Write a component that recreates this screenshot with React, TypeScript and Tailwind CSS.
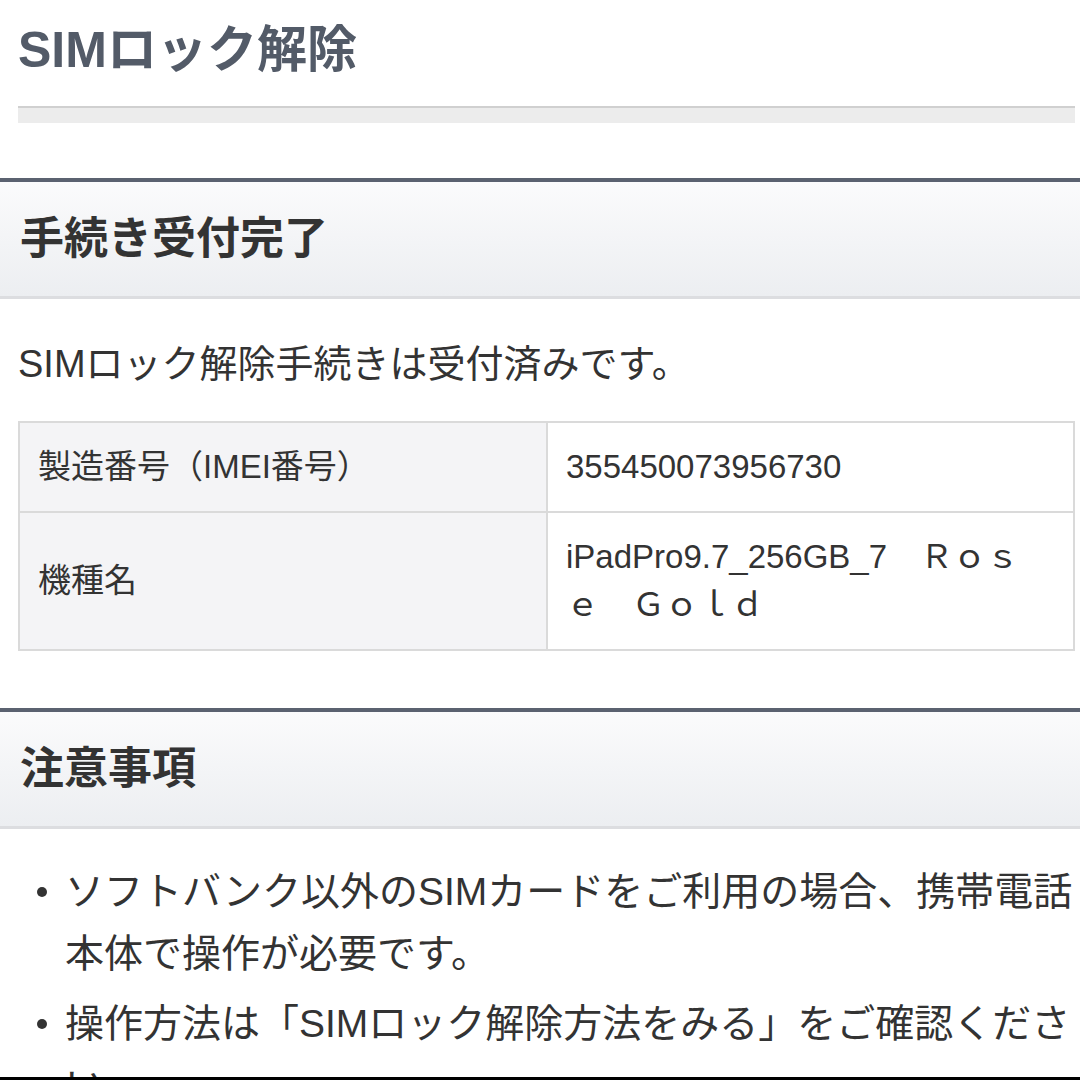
import React from 'react';

const font = { fontFamily: '"Liberation Sans", "Noto Sans CJK JP", sans-serif' };

const SectionHeader: React.FC<{ title: string }> = ({ title }) => (
  <div className="border-t-4 border-b-[3px] border-t-[#5b6270] border-b-[#dcdde0] bg-gradient-to-b from-[#fbfbfc] to-[#eceef1] h-[121px] flex items-center px-[20px]">
    <h2 className="text-[44px] font-bold leading-none text-[#333333]">{title}</h2>
  </div>
);

const rows = [
  { label: '製造番号（IMEI番号）', value: '355450073956730' },
  { label: '機種名', value: 'iPadPro9.7_256GB_7　Ｒｏｓｅ　Ｇｏｌｄ' },
];

const notes = [
  'ソフトバンク以外のSIMカードをご利用の場合、携帯電話本体で操作が必要です。',
  '操作方法は「SIMロック解除方法をみる」をご確認ください。',
];

const App: React.FC = () => {
  return (
    <div className="h-[1080px] w-[1080px] overflow-hidden flex flex-col bg-white" style={font}>
      <div className="flex-1 min-h-0 overflow-hidden">
        <div className="px-[18px] pt-[20px]">
          <h1 className="text-[50px] font-bold leading-[60px] text-[#535b68]">SIMロック解除</h1>
          <div className="mt-[26px] h-[17px] border-t-2 border-[#d0d0d0] bg-[#ececec] mr-[-13px]" />
        </div>

        <div className="mt-[55px]">
          <SectionHeader title="手続き受付完了" />
        </div>

        <div className="px-[18px] pr-[5px]">
          <p className="mt-[39px] text-[38px] leading-[52px] text-[#333333]">SIMロック解除手続きは受付済みです。</p>
          <table className="mt-[31px] w-full border-collapse text-[33px] text-[#333333]">
            <tbody>
              {rows.map((r) => (
                <tr key={r.label}>
                  <td className="w-[528px] border-2 border-[#dadada] bg-[#f4f4f6] pl-[18px] pr-4 py-[20px] leading-[48px] align-middle">
                    {r.label}
                  </td>
                  <td className="border-2 border-[#dadada] bg-white pl-[18px] pr-[48px] py-[20px] leading-[48px] align-middle break-all">
                    {r.value}
                  </td>
                </tr>
              ))}
            </tbody>
          </table>
        </div>

        <div className="mt-[57px]">
          <SectionHeader title="注意事項" />
        </div>

        <ul className="mt-[32px] pl-[65px] pr-[4px] flex flex-col gap-[8px] text-[39px] leading-[62px] text-[#333333]">
          {notes.map((n) => (
            <li key={n} className="relative">
              <span className="absolute left-[-28px] top-[26px] h-[10px] w-[10px] rounded-full bg-[#333333]" />
              {n}
            </li>
          ))}
        </ul>
      </div>
      <div className="h-[3px] bg-black shrink-0" />
    </div>
  );
};

export default App;
